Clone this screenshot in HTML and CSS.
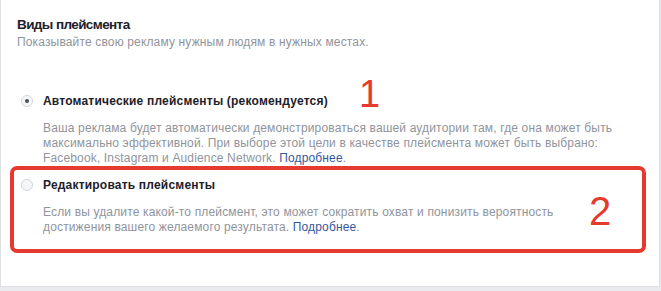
FILE: index.html
```html
<!DOCTYPE html>
<html lang="ru">
<head>
  <meta charset="UTF-8" />
  <title>Виды плейсмента</title>
  <link rel="stylesheet" href="styles.css">
</head>
<body>
  <section class="card">
    <div class="card-head">
      <h2>Виды плейсмента</h2>
      <p class="sub">Показывайте свою рекламу нужным людям в нужных местах.</p>
    </div>
    <div class="options">
      <div class="option">
        <label class="option-title">
          <span class="radio checked"></span>
          Автоматические плейсменты (рекомендуется)
        </label>
        <p class="option-desc">Ваша реклама будет автоматически демонстрироваться вашей аудитории там, где она может быть максимально эффективной. При выборе этой цели в качестве плейсмента может быть выбрано: Facebook, Instagram и Audience Network. <a href="#">Подробнее</a>.</p>
        <span class="mark mark-1">1</span>
      </div>
      <div class="option marked">
        <label class="option-title">
          <span class="radio"></span>
          Редактировать плейсменты
        </label>
        <p class="option-desc">Если вы удалите какой-то плейсмент, это может сократить охват и понизить вероятность достижения вашего желаемого результата. <a href="#">Подробнее</a>.</p>
        <span class="mark mark-2">2</span>
      </div>
    </div>
  </section>
</body>
</html>
```

FILE: styles.css
```css
body {
  margin: 0;
  background: #e9ebee;
  font-family: Helvetica, Arial, 'Liberation Sans', sans-serif;
  color: #1d2129;
}

.card {
  width: 658px;
  background: #fff;
  border: 1px solid #dddfe2;
  border-top: none;
  padding: 17px 0 33px;
}

.card-head {
  padding: 0 16px;
}

.card-head h2 {
  margin: 0;
  font-size: 13.5px;
  line-height: 16px;
  letter-spacing: -0.6px;
  font-weight: bold;
}

.sub {
  margin: 2px 0 0;
  font-size: 12px;
  line-height: 14px;
  letter-spacing: 0.15px;
  color: #90949c;
}

.options {
  margin-top: 33px;
  padding: 0 13px 0 9px;
}

.option {
  position: relative;
  border: 4px solid transparent;
  border-bottom: none;
  border-radius: 7px;
  padding: 7px 7px 0;
}

.option.marked {
  border: 4px solid #e63a2e;
  padding-bottom: 14px;
}

.option-title {
  display: flex;
  align-items: center;
  gap: 10px;
  font-size: 12px;
  line-height: 16px;
  letter-spacing: 0.2px;
  font-weight: bold;
}

.radio {
  width: 10px;
  height: 10px;
  border-radius: 50%;
  border: 1px solid #d3d6db;
  background: #f5f6f7;
  display: flex;
  align-items: center;
  justify-content: center;
}

.radio.checked::after {
  content: "";
  width: 4px;
  height: 4px;
  border-radius: 50%;
  background: #4b4f56;
}

.option-desc {
  margin: 12px 0 0 22px;
  font-size: 12px;
  line-height: 15px;
  letter-spacing: 0.15px;
  color: #90949c;
}

.marked .option-desc {
  margin-right: 24px;
}

.option-desc a {
  color: #365899;
  text-decoration: none;
}

.mark {
  position: absolute;
  font-family: 'Liberation Sans', Arial, sans-serif;
  font-size: 38px;
  line-height: 1;
  color: #e63a2e;
}

.mark-1 {
  left: 345px;
  top: -11px;
}

.mark-2 {
  left: 575px;
  top: 21px;
  font-size: 40px;
}
```
